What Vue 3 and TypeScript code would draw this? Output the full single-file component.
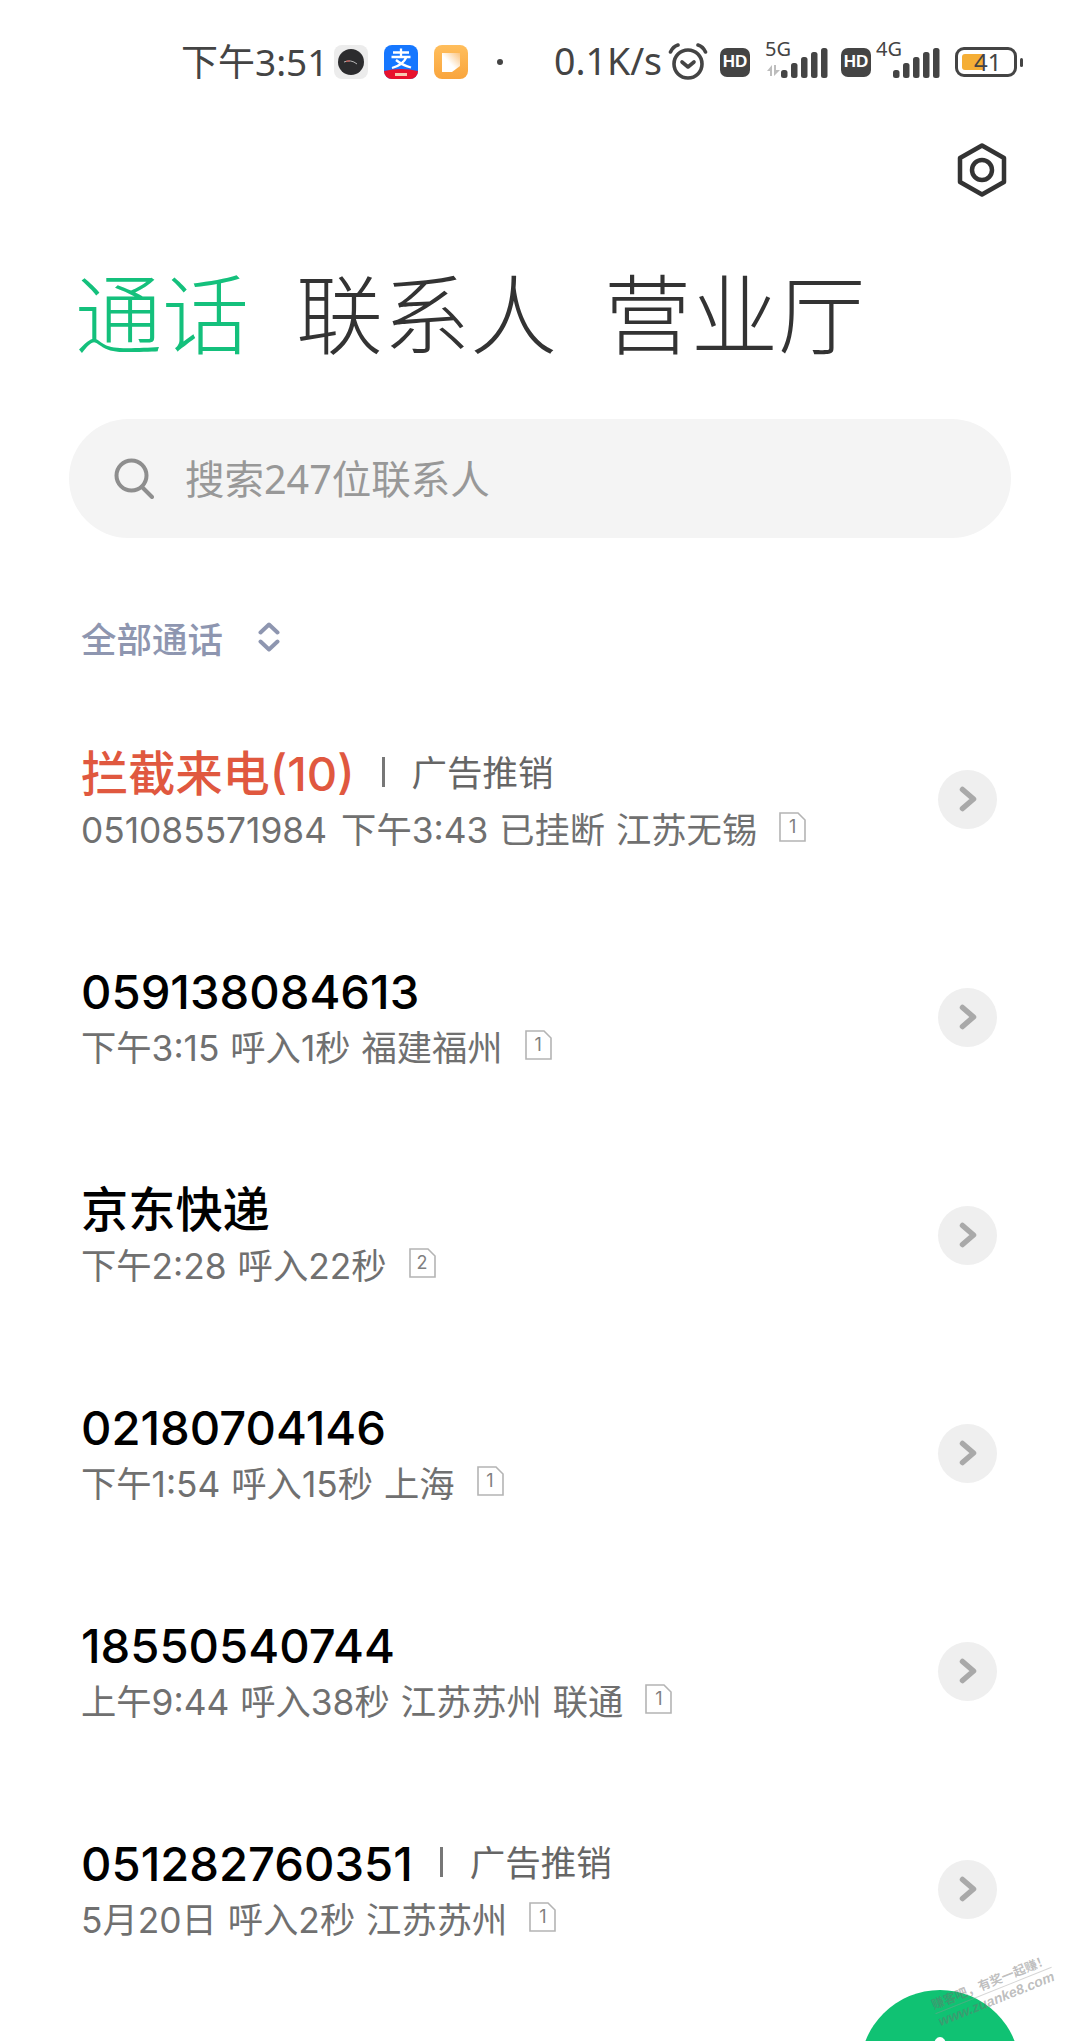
<script setup lang="ts">
interface Call {
  title: string
  tag?: string
  sub: string
  sim: number
  blocked?: boolean
  named?: boolean
}

const calls: Call[] = [
  { title: '拦截来电(10)', tag: '广告推销', sub: '051085571984 \u200a下午3:43 已挂断 江苏无锡', sim: 1, blocked: true, named: true },
  { title: '059138084613', sub: '下午3:15 呼入1秒 福建福州', sim: 1 },
  { title: '京东快递', sub: '下午2:28 呼入22秒', sim: 2, named: true },
  { title: '02180704146', sub: '下午1:54 呼入15秒 上海', sim: 1 },
  { title: '18550540744', sub: '上午9:44 呼入38秒 江苏苏州 联通', sim: 1 },
  { title: '051282760351', tag: '广告推销', sub: '5月20日 呼入2秒 江苏苏州', sim: 1 }
]

const bars = [
  { x: 0, h: 8 },
  { x: 10, h: 15 },
  { x: 20, h: 21 },
  { x: 30, h: 26 },
  { x: 40, h: 30 }
]
</script>

<template>
  <div class="page">
    <header class="status">
      <span class="clock">下午3:51</span>
      <svg class="app first" viewBox="0 0 34 34">
        <rect width="34" height="34" rx="8" fill="#ececec" />
        <circle cx="17" cy="17" r="13" fill="#2c2c2e" />
        <path d="M10 17 Q17 14 23 19" fill="none" stroke="#b9b9b9" stroke-width="1" />
        <path d="M12 16.400 L16 15.800" stroke="#d0524a" stroke-width="1" />
      </svg>
      <svg class="app" viewBox="0 0 34 34">
        <defs>
          <clipPath id="appclip"><rect width="34" height="34" rx="8" /></clipPath>
        </defs>
        <g clip-path="url(#appclip)">
          <rect width="34" height="34" fill="#1677ff" />
          <path d="M0 26 Q17 22 34 26 V34 H0 Z" fill="#e8112d" />
          <path d="M9 7.500 H25 M17 3.500 V12 M7.500 12 H26.500 M22.500 12 Q19 20 8 23 M12 15 Q18 20 27 22.500" fill="none" stroke="#fff" stroke-width="2.300" />
          <rect x="11" y="28" width="12" height="3" fill="#f7c9b0" />
        </g>
      </svg>
      <svg class="app" viewBox="0 0 34 34">
        <defs>
          <linearGradient id="notebg" x1="0" y1="0" x2="0" y2="1">
            <stop offset="0" stop-color="#ffbe5c" />
            <stop offset="1" stop-color="#f9a53d" />
          </linearGradient>
          <linearGradient id="notepg" x1="0" y1="1" x2="1" y2="0">
            <stop offset="0.45" stop-color="#fff" />
            <stop offset="1" stop-color="#fbc37d" />
          </linearGradient>
        </defs>
        <rect width="34" height="34" rx="8" fill="url(#notebg)" />
        <path d="M8 8 H26 V21 L18 27 H8 Z" fill="url(#notepg)" />
      </svg>
      <span class="dot"></span>
      <span class="speed">0.1K/s</span>
      <svg class="alarm" viewBox="0 0 40 38" fill="none" stroke="#444" stroke-width="3.600" stroke-linecap="round" stroke-linejoin="round">
        <circle cx="20" cy="21" r="14" />
        <path d="M14 19 L20 24 L26 19" />
        <path d="M2.500 9 Q5 3.500 10 2 M37.500 9 Q35 3.500 30 2" />
      </svg>
      <span class="hd">HD</span>
      <span class="net">
        <span class="net-label">5G</span>
        <svg class="arrows" viewBox="0 0 13 12">
          <path d="M0 6 L5 0 V11 H3 V6 Z M7 0 H9 V5 H13 L7 11 Z" fill="#bdbdbd" />
        </svg>
        <svg class="signal" viewBox="0 0 48 30">
          <rect v-for="b in bars" :key="b.x" :x="b.x" :y="30 - b.h" width="6.500" :height="b.h" rx="2.500" fill="#444" />
        </svg>
      </span>
      <span class="hd second">HD</span>
      <span class="net four">
        <span class="net-label">4G</span>
        <svg class="signal" viewBox="0 0 48 30">
          <rect v-for="b in bars" :key="b.x" :x="b.x" :y="30 - b.h" width="6.500" :height="b.h" rx="2.500" fill="#444" />
        </svg>
      </span>
      <span class="battery">
        <span class="battery-fill"></span>
        <span class="battery-num">41</span>
      </span>
      <span class="battery-nub"></span>
    </header>

    <div class="tools">
      <svg class="gear" viewBox="0 0 50 54" fill="none" stroke="#333" stroke-linejoin="round">
        <path d="M25 2.500 L47 15 V39 L25 51.500 L3 39 V15 Z" stroke-width="4.500" />
        <circle cx="25" cy="27" r="10" stroke-width="4.500" />
      </svg>
    </div>

    <nav class="tabs">
      <span class="tab active">通话</span>
      <span class="tab">联系人</span>
      <span class="tab">营业厅</span>
    </nav>

    <div class="search">
      <svg class="search-icon" viewBox="0 0 40 41" fill="none" stroke="#8e8e8e" stroke-width="4" stroke-linecap="round">
        <circle cx="17.500" cy="17.500" r="15" />
        <path d="M28 29 L38 39" />
      </svg>
      <span class="search-text">搜索247位联系人</span>
    </div>

    <div class="filter">
      <span>全部通话</span>
      <svg class="updown" viewBox="0 0 22 30" fill="none" stroke="#8e96b0" stroke-width="4" stroke-linecap="round" stroke-linejoin="round">
        <path d="M2.500 10.500 L11 2.500 L19.500 10.500 M2.500 19.500 L11 27.500 L19.500 19.500" />
      </svg>
    </div>

    <ul class="list">
      <li v-for="c in calls" :key="c.title + c.sub" class="row">
        <div class="info">
          <div class="title-line">
            <span class="title" :class="{ blocked: c.blocked, named: c.named }">{{ c.title }}</span>
            <template v-if="c.tag">
              <span class="sep"></span>
              <span class="tag">{{ c.tag }}</span>
            </template>
          </div>
          <div class="sub-line">
            <span class="sub">{{ c.sub }}</span>
            <span class="sim">
              <svg viewBox="0 0 27 30" fill="none" stroke="#b4b4b4" stroke-width="1.600">
                <path d="M2 1 H19 L26 8 V29 H1 V1 Z" />
              </svg>
              <span class="sim-num">{{ c.sim }}</span>
            </span>
          </div>
        </div>
        <span class="go">
          <svg viewBox="0 0 18 26" fill="none" stroke="#a9a9a9" stroke-width="5.500" stroke-linecap="round" stroke-linejoin="round">
            <path d="M3.500 3.500 L14.500 13 L3.500 22.500" />
          </svg>
        </span>
      </li>
    </ul>

    <div class="fab"><span class="fab-glyph"></span></div>
    <div class="watermark">
      <span class="wm-top">赚客吧，有奖一起赚！</span>
      <span class="wm-bottom">www.zuanke8.com</span>
    </div>
  </div>
</template>

<style scoped>
.page {
  position: relative;
  width: 1080px;
  height: 2041px;
  overflow: hidden;
  background: #fff;
  font-family: Inter, "Noto Sans CJK SC", sans-serif;
}

.status {
  display: flex;
  align-items: center;
  height: 124px;
  padding-left: 181px;
  color: #444;
}
.clock {
  width: 153px;
  margin-bottom: 4px;
  font-family: "Noto Sans", "Noto Sans CJK SC", sans-serif;
  font-size: 37px;
  white-space: nowrap;
}
.app {
  width: 34px;
  height: 34px;
  margin-right: 16px;
}
.dot {
  width: 6px;
  height: 6px;
  margin-left: 13px;
  border-radius: 50%;
  background: #444;
}
.speed {
  width: 114px;
  margin-bottom: 4px;
  margin-left: 51px;
  font-family: "Noto Sans", sans-serif;
  font-size: 37.500px;
  white-space: nowrap;
}
.alarm {
  width: 40px;
  height: 38px;
}
.hd {
  display: flex;
  align-items: center;
  justify-content: center;
  width: 30px;
  height: 29px;
  margin-left: 12px;
  border-radius: 7px;
  background: #444;
  color: #fff;
  font-family: "Liberation Sans", sans-serif;
  font-size: 17px;
  font-weight: 700;
}
.net {
  position: relative;
  display: flex;
  align-items: flex-end;
  justify-content: flex-end;
  width: 79px;
  height: 32px;
}
.net.four {
  width: 70px;
}
.net-label {
  position: absolute;
  top: -7px;
  left: 15px;
  font-family: "Noto Sans", sans-serif;
  font-size: 20px;
  line-height: 20px;
  color: #444;
}
.net.four .net-label {
  left: 5px;
}
.arrows {
  position: absolute;
  left: 17px;
  bottom: 1px;
  width: 13px;
  height: 12px;
}
.signal {
  width: 48px;
  height: 30px;
}
.battery {
  position: relative;
  display: block;
  width: 62px;
  height: 30px;
  margin-left: 14px;
  box-sizing: border-box;
  border: 3px solid #444;
  border-radius: 9px;
}
.battery-fill {
  position: absolute;
  left: 4px;
  top: 4px;
  bottom: 4px;
  width: 21px;
  border-radius: 3px 0 0 3px;
  background: #f5ae35;
}
.battery-num {
  position: absolute;
  left: 16px;
  top: -3px;
  font-family: "Noto Sans", sans-serif;
  font-size: 24px;
  line-height: 30px;
  color: #444;
}
.battery-nub {
  width: 3px;
  height: 9px;
  margin-left: 3px;
  border-radius: 2px;
  background: #444;
}

.tools {
  display: flex;
  justify-content: flex-end;
  height: 54px;
  margin-top: 19px;
  padding-right: 73px;
}
.gear {
  width: 50px;
  height: 54px;
}

.tabs {
  display: flex;
  gap: 47px;
  margin-top: 58px;
  padding-left: 75px;
  font-family: "Noto Sans CJK SC", sans-serif;
  font-size: 87px;
  font-weight: 300;
  line-height: 110px;
  color: #333;
}
.tab.active {
  color: #14c07c;
}

.search {
  display: flex;
  align-items: center;
  height: 119px;
  margin: 54px 69px 0;
  padding-left: 45px;
  border-radius: 60px;
  background: #f4f4f4;
  color: #989898;
  font-family: "Noto Sans", "Noto Sans CJK SC", sans-serif;
  font-size: 39.500px;
}
.search-icon {
  width: 40px;
  height: 41px;
  margin-right: 31px;
}
.search-text {
  margin-bottom: 4px;
}

.filter {
  display: flex;
  align-items: center;
  gap: 35px;
  height: 40px;
  margin-top: 79px;
  padding-left: 81px;
  color: #8e96b0;
  font-family: "Noto Sans CJK SC", sans-serif;
  font-size: 35.500px;
  font-weight: 500;
}
.updown {
  width: 22px;
  height: 30px;
}

.list {
  list-style: none;
  margin: 33px 0 0;
  padding: 0;
}
.row {
  display: flex;
  align-items: center;
  justify-content: space-between;
  height: 218px;
  padding: 0 83px 0 81px;
}
.title-line {
  display: flex;
  align-items: center;
  height: 62px;
}
.title {
  color: #000;
  font-family: Inter, "Noto Sans CJK SC", sans-serif;
  font-size: 47.200px;
  font-weight: 500;
  white-space: nowrap;
}
.title.named {
  margin-bottom: 6px;
}
.title.blocked {
  color: #e0583f;
}
.sep {
  width: 3px;
  height: 30px;
  margin: 0 27px 2px;
  background: #777;
}
.tag {
  margin-bottom: 6px;
  color: #666;
  font-family: "Noto Sans CJK SC", sans-serif;
  font-size: 35.500px;
  white-space: nowrap;
}
.sub-line {
  display: flex;
  align-items: center;
  height: 52px;
  margin-top: -3px;
  margin-bottom: 3px;
}
.sub {
  color: #707070;
  font-size: 35.300px;
  font-weight: 400;
  word-spacing: 1px;
  white-space: pre;
}
.sim {
  position: relative;
  display: block;
  width: 27px;
  height: 30px;
  margin-left: 22px;
}
.sim svg {
  display: block;
  width: 27px;
  height: 30px;
}
.sim-num {
  position: absolute;
  inset: 0;
  display: flex;
  align-items: center;
  justify-content: center;
  color: #808080;
  font-size: 18px;
  line-height: 30px;
}
.go {
  display: flex;
  align-items: center;
  justify-content: center;
  width: 59px;
  height: 59px;
  border-radius: 50%;
  background: #efefef;
}
.go svg {
  width: 18px;
  height: 26px;
}

.fab {
  position: absolute;
  left: 860px;
  top: 1990px;
  width: 160px;
  height: 160px;
  border-radius: 50%;
  background: #10c273;
}
.fab-glyph {
  position: absolute;
  left: 74px;
  top: 47px;
  width: 12px;
  height: 16px;
  border-radius: 50%;
  background: #fff;
}
.watermark {
  position: absolute;
  left: 942px;
  top: 1994px;
  display: flex;
  flex-direction: column;
  transform: rotate(-21.800deg);
  transform-origin: left bottom;
  color: rgba(110, 110, 110, 0.45);
  line-height: 17px;
  white-space: nowrap;
}
.wm-top {
  padding-bottom: 1px;
  border-bottom: 1px solid rgba(150, 150, 150, 0.4);
  font-family: "Noto Sans CJK SC", sans-serif;
  font-size: 12.500px;
  font-weight: 700;
}
.wm-bottom {
  font-family: "Liberation Sans", sans-serif;
  font-size: 14px;
  font-style: italic;
  font-weight: 700;
}
</style>
